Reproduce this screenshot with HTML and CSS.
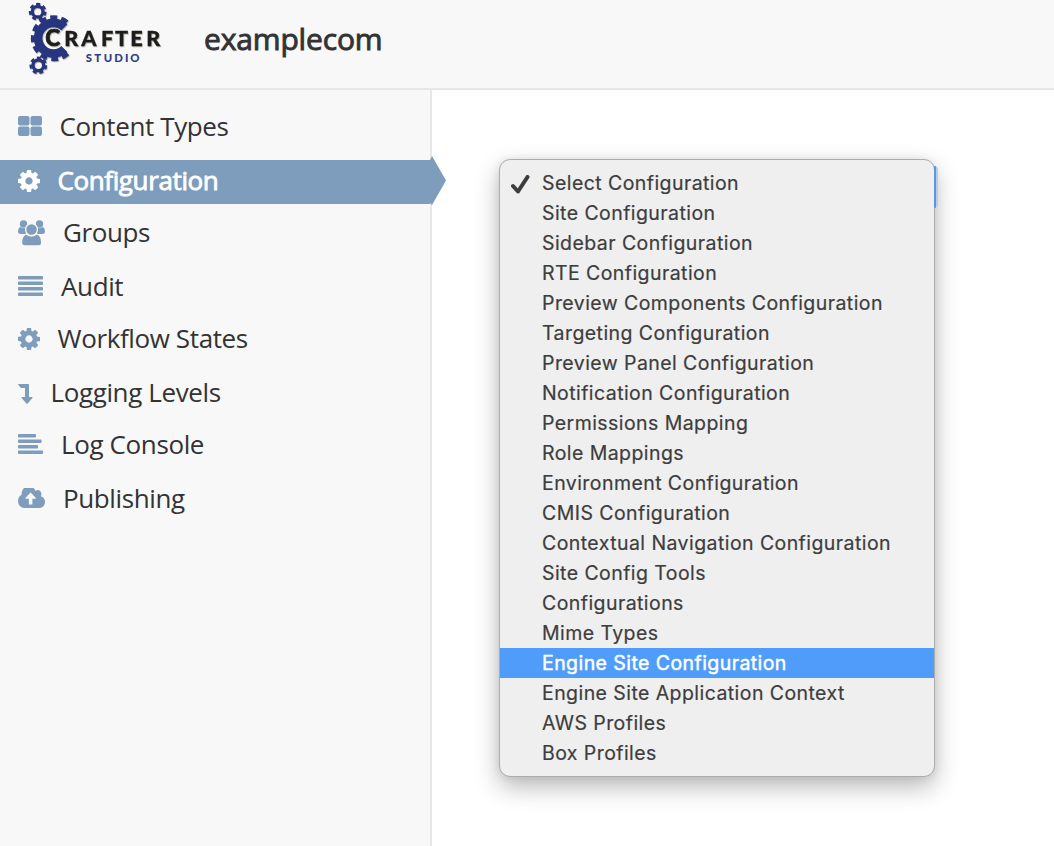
FILE: index.html
```html
<!DOCTYPE html>
<html lang="en">
<head>
<meta charset="utf-8">
<title>Crafter Studio</title>
<link rel="stylesheet" href="styles.css">
</head>
<body>
<svg class="defs" aria-hidden="true">
  <symbol id="cog" viewBox="0 128 1536 1536"><path fill-rule="evenodd" d="M1024 896q0 106-75 181t-181 75-181-75-75-181 75-181 181-75 181 75 75 181zm512-109v222q0 12-8 23t-20 13l-185 28q-19 54-39 91 35 50 107 138 10 12 10 25t-9 23q-27 37-99 108t-94 71q-12 0-26-9l-138-108q-44 23-91 38-16 136-29 186-7 28-36 28h-222q-14 0-24.500-8.500t-11.500-21.500l-28-184q-49-16-90-37l-141 107q-10 9-25 9-14 0-25-11-126-114-165-168-7-10-7-23 0-12 8-23 15-21 51-66.500t54-70.500q-27-50-41-99l-183-27q-13-2-21-12.500t-8-23.500v-222q0-12 8-23t19-13l186-28q14-46 39-92-40-57-107-138-10-12-10-24 0-10 9-23 26-36 98.500-107.500t94.500-71.500q13 0 26 10l138 107q44-23 91-38 16-136 29-186 7-28 36-28h222q14 0 24.500 8.500t11.500 21.500l28 184q49 16 90 37l142-107q9-9 24-9 13 0 25 10 129 119 165 170 7 8 7 22 0 12-8 23-15 21-51 66.500t-54 70.500q26 50 41 98l183 28q13 2 21 12.500t8 23.500z"/></symbol>
</svg>
<header class="header">
  <svg class="logo" viewBox="0 0 450 264">
    <g class="logo-glow">
      <g class="gear">
        <circle cx="53" cy="35" r="16" stroke-width="10"/>
        <circle cx="53" cy="35" r="22" stroke-width="9" stroke-dasharray="11.500 8.240"/>
        <circle cx="55" cy="196" r="16" stroke-width="10"/>
        <circle cx="55" cy="196" r="22" stroke-width="9" stroke-dasharray="11.500 8.240"/>
        <path d="M133 147A46 46 0 1 1 133 82" stroke-width="26"/>
        <path d="M139 156A56 56 0 1 1 139 73" stroke-width="26" stroke-dasharray="18 11.500"/>
      </g>
      <g class="logo-name">
        <text class="logo-initial" x="76" y="138">C</text>
        <text x="133 184 243 285 331 379" y="137">RAFTER</text>
      </g>
    </g>
    <text class="logo-sub" x="197 223 251 283 315 331" y="187">STUDIO</text>
  </svg>
  <h1 class="site-name">examplecom</h1>
</header>
<div class="layout">
  <nav class="sidebar">
    <a class="item types"><svg width="24" height="20"><rect width="11.500" height="9.500" rx="2"/><rect x="12.500" width="11.500" height="9.500" rx="2"/><rect y="10.500" width="11.500" height="9.500" rx="2"/><rect x="12.500" y="10.500" width="11.500" height="9.500" rx="2"/></svg><span>Content Types</span></a>
    <a class="item config active"><svg width="22" height="22"><use href="#cog"/></svg><span>Configuration</span></a>
    <a class="item groups"><svg width="27" height="26"><circle cx="5.500" cy="4" r="3.700"/><circle cx="21.500" cy="4" r="3.700"/><path d="M2 7Q5 9 8 7.500Q7 12 9 14H3Q0 14 0 11.500Q0 8 2 7ZM25 7Q22 9 19 7.500Q20 12 18 14h6Q27 14 27 11.500Q27 8 25 7Z"/><path class="cut" d="M8 14Q13.500 18 19 14Q24 16 23.700 23Q23.500 26 20 26H7Q3.700 26 3.500 23Q3.500 16 8 14Z"/><circle class="cut" cx="13.500" cy="9.500" r="5.900"/></svg><span>Groups</span></a>
    <a class="item audit"><svg width="25" height="20"><rect width="25" height="3.500" rx=".8"/><rect y="5.500" width="25" height="3.500" rx=".8"/><rect y="11" width="25" height="3.500" rx=".8"/><rect y="16.500" width="25" height="3.500" rx=".8"/></svg><span>Audit</span></a>
    <a class="item workflow"><svg width="22" height="22"><use href="#cog"/></svg><span>Workflow States</span></a>
    <a class="item levels"><svg width="15" height="20"><path d="M.5 0H10.300Q11 0 11 .8V13H14Q15 13 14.400 14L9.700 19.500Q9 20.200 8.300 19.500L3.700 14Q3 13 4 13H7V4H3.500Q3 4 2.700 3.700L.2 .8Q0 0 .5 0Z"/></svg><span>Logging Levels</span></a>
    <a class="item console"><svg width="25" height="20"><rect width="18" height="3.500" rx=".8"/><rect y="5.500" width="23.500" height="3.500" rx=".8"/><rect y="11" width="20" height="3.500" rx=".8"/><rect y="16.500" width="25" height="3.500" rx=".8"/></svg><span>Log Console</span></a>
    <a class="item publish"><svg width="27" height="20" viewBox="0 256 1920 1280" preserveAspectRatio="none"><path d="M1920 1152q0 159-112.500 271.500t-271.500 112.500h-1088q-185 0-316.500-131.500t-131.500-316.500q0-130 70-240t188-165q-2-30-2-43 0-212 150-362t362-150q156 0 285.500 87t188.500 231q71-62 166-62 106 0 181 75t75 181q0 76-41 138 130 31 213.500 135.500t83.500 238.500z"/><path class="hole" d="M1280 912q0-14-9-23l-352-330q-23-18-46 0l-351 330q-10 12-10 24 0 28 32 31h224v330q0 32 32 32h192q32 0 32-32v-330h224q32 0 32-32z"/></svg><span>Publishing</span></a>
  </nav>
  <main class="content">
    <div class="select-wrap">
      <div class="select-focus"></div>
      <ul class="menu">
        <li class="option"><svg class="check" width="19" height="19"><path d="M2 11L7 16.500L16.500 2"/></svg>Select Configuration</li>
        <li class="option">Site Configuration</li>
        <li class="option">Sidebar Configuration</li>
        <li class="option">RTE Configuration</li>
        <li class="option">Preview Components Configuration</li>
        <li class="option">Targeting Configuration</li>
        <li class="option">Preview Panel Configuration</li>
        <li class="option">Notification Configuration</li>
        <li class="option">Permissions Mapping</li>
        <li class="option">Role Mappings</li>
        <li class="option">Environment Configuration</li>
        <li class="option">CMIS Configuration</li>
        <li class="option">Contextual Navigation Configuration</li>
        <li class="option">Site Config Tools</li>
        <li class="option">Configurations</li>
        <li class="option">Mime Types</li>
        <li class="option highlighted">Engine Site Configuration</li>
        <li class="option">Engine Site Application Context</li>
        <li class="option">AWS Profiles</li>
        <li class="option">Box Profiles</li>
      </ul>
    </div>
  </main>
</div>
</body>
</html>
```

FILE: styles.css
```css
* { box-sizing: border-box; }
body {
  margin: 0;
  height: 846px;
  overflow: hidden;
  display: flex;
  flex-direction: column;
  background: #fff;
  color: #333;
  font-family: "Open Sans", sans-serif;
}
.defs { display: none; }
.header {
  height: 90px;
  flex: none;
  display: flex;
  padding-left: 20px;
  background: #f8f8f8;
  border-bottom: 2px solid #e7e7e7;
}
.logo { width: 150px; height: 88px; flex: none; }
.logo-glow { filter: drop-shadow(2px 3px 2px #b8b4a8); }
.gear { fill: none; stroke: #27357e; }
.logo-name { font: 900 65px Lato, sans-serif; fill: #1d1d1b; stroke: #1d1d1b; stroke-width: 1px; }
.logo-initial { font-size: 68px; stroke-width: 2px; }
.logo-sub { font: 900 34px Lato, sans-serif; fill: #303c87; }
.site-name {
  margin: 0 0 0 34px;
  font-size: 30px;
  font-weight: 400;
  line-height: 78px;
  letter-spacing: -.15px;
  -webkit-text-stroke: .9px currentColor;
}
.layout { display: flex; flex: 1; }
.sidebar {
  width: 432px;
  flex: none;
  padding-top: 16px;
  background: #f8f8f8;
  border-right: 2px solid #e7e7e7;
}
.item {
  display: flex;
  align-items: center;
  height: 44px;
  margin-bottom: 8px;
  padding-left: 18px;
  font-size: 26px;
  line-height: 42px;
  letter-spacing: -.38px;
  white-space: nowrap;
}
.item:nth-child(odd) { margin-bottom: 10px; }
.item svg { fill: #7e9cbb; flex: none; margin-right: 17.500px; position: relative; top: -1px; }
.item svg[height="20"] { top: -2px; }
.item.levels svg { top: 0; }
.groups svg, .audit svg, .console svg, .publish svg { margin-right: 18px; }
.item span { position: relative; top: -2px; }
.cut { stroke: #f8f8f8; stroke-width: 1.3px; }
.item svg .hole { fill: #f8f8f8; }
.active {
  position: relative;
  background: #7e9cbb;
  color: #fff;
  -webkit-text-stroke: .8px currentColor;
}
.item.active svg { fill: #fff; }
.active::after {
  content: "";
  position: absolute;
  left: 430px;
  top: -4px;
  width: 16px;
  height: 49px;
  background: #7e9cbb;
  clip-path: polygon(0 4px, 2px 0, 100% 50%, 2px 100%, 0 47px);
}
.content { flex: 1; padding: 69px 0 0 67px; }
.select-wrap { position: relative; width: 436px; }
.select-focus {
  position: absolute;
  z-index: 1;
  top: 7px;
  right: -3px;
  width: 4px;
  height: 42px;
  border-radius: 0 4px 4px 0;
  background: #b3cdec;
  border-left: 2px solid #5f97d4;
}
.menu {
  position: relative;
  margin: 0;
  height: 618px;
  padding: 8px 0;
  list-style: none;
  background: #efefef;
  border: 1px solid #acacac;
  border-radius: 11px;
  box-shadow: 0 10px 24px rgba(0,0,0,.28), 0 0 8px rgba(0,0,0,.08);
  color: #3d3d3d;
  font: 19.5px/30px Inter, sans-serif;
  letter-spacing: .43px;
  -webkit-text-stroke: .2px currentColor;
}
.option { position: relative; height: 30px; padding-left: 42px; white-space: nowrap; }
.check { position: absolute; left: 11px; top: 7px; fill: none; stroke: #3d3d3d; stroke-width: 4; stroke-linecap: round; stroke-linejoin: round; }
.highlighted { background: #4f9cfb; color: #fff; -webkit-text-stroke-width: .45px; }
```
